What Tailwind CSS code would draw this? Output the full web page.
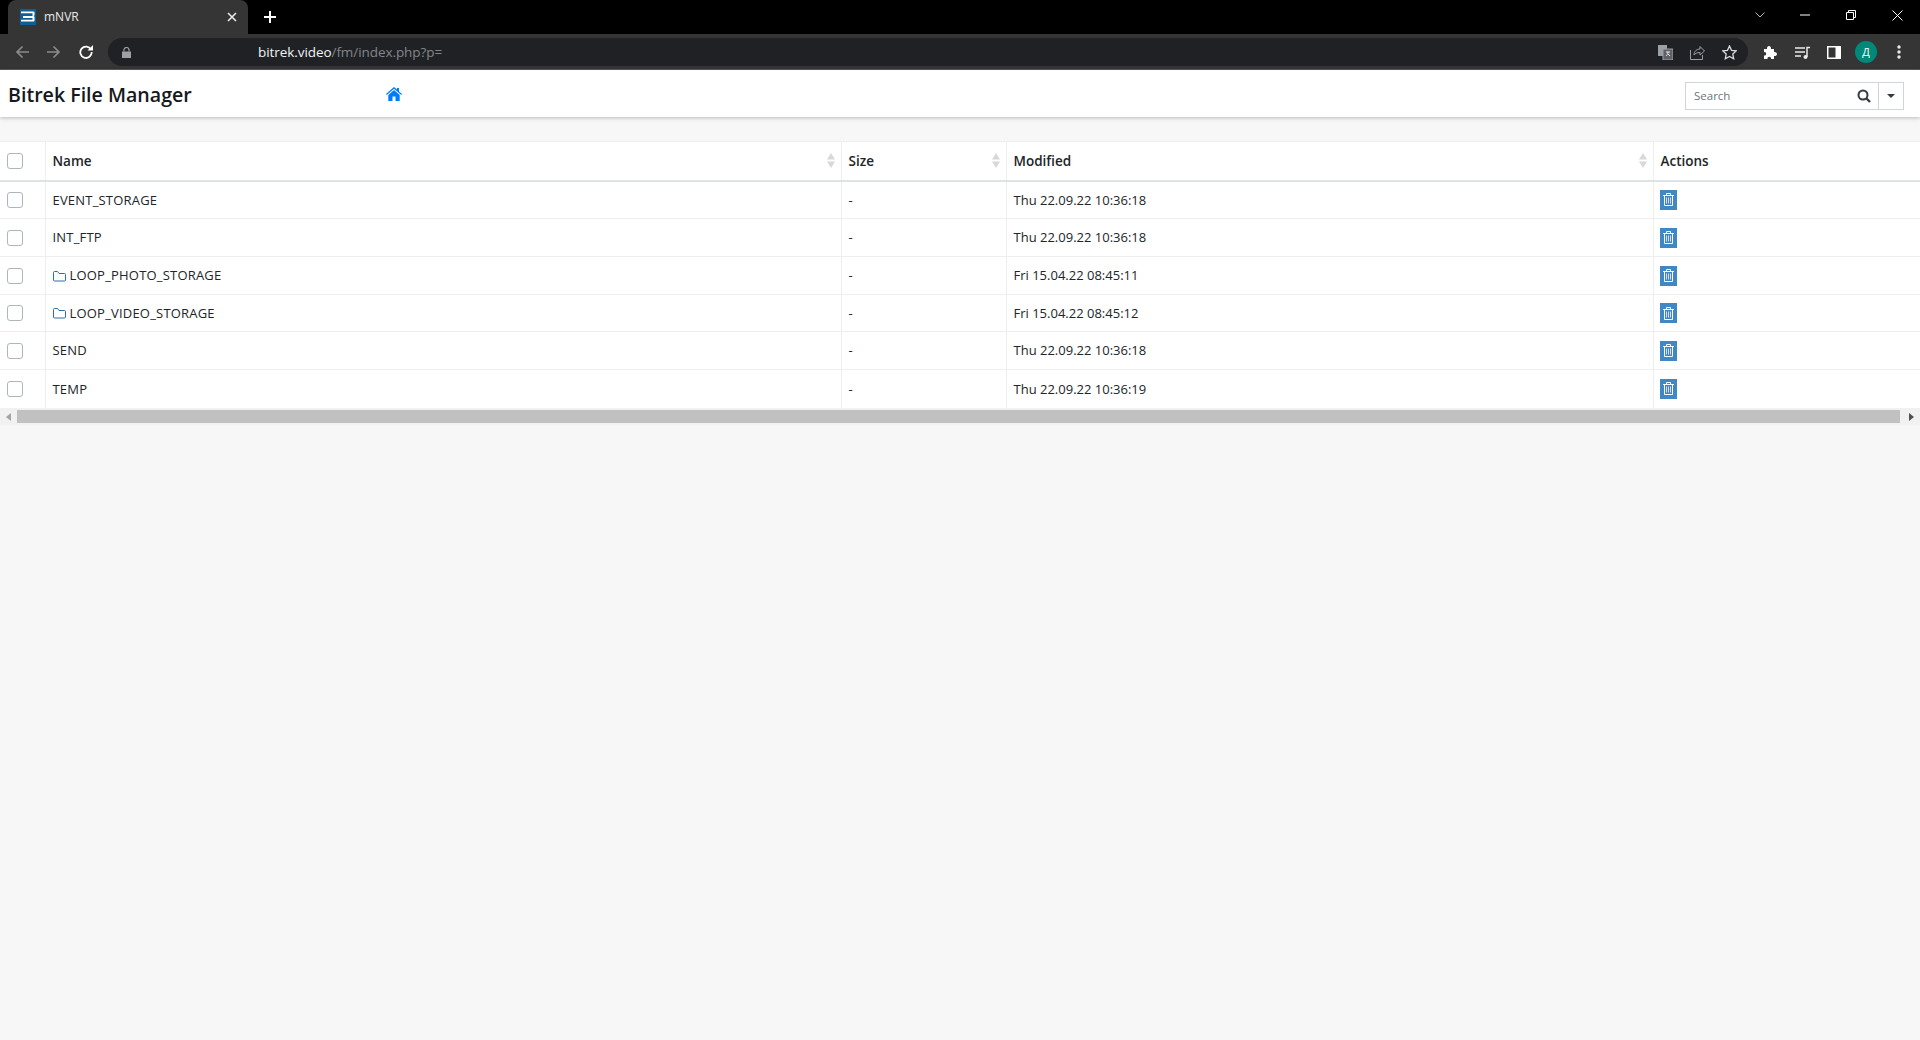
<!DOCTYPE html>
<html lang="en">
<head>
    <meta charset="UTF-8">
    <title>mNVR</title>
    <script src="https://cdn.jsdelivr.net/npm/@tailwindcss/browser@4"></script>
</head>
<body class="h-screen overflow-hidden bg-[#f7f7f7] font-['Open_Sans',sans-serif] text-[13px] text-[#212529]">

    <!-- Browser tab strip -->
    <div class="h-[34px] bg-black flex items-end pl-2 text-white">
        <div class="w-[240px] h-[34px] bg-[#353535] rounded-t-lg flex items-center pl-3 pr-2">
            <svg class="w-4 h-4 shrink-0" viewBox="0 0 16 16"><rect width="16" height="16" fill="#0f5e96"/><path d="M1 2.500h12.500a1 1 0 0 1 1 1v2.700l-.9.800.9.800v3.700a1 1 0 0 1-1 1H1v-1.800h11.500V9H3V7h9.500V4.300H1z" fill="#fff"/></svg>
            <span class="ml-2 text-xs text-[#e8eaed]">mNVR</span>
            <svg class="w-[10px] h-[10px] ml-auto mr-[3px]" viewBox="0 0 10 10"><path d="M1 1l8 8M9 1l-8 8" stroke="#e8eaed" stroke-width="1.6"/></svg>
        </div>
        <svg class="w-3 h-3 ml-4 mb-[11px]" viewBox="0 0 12 12"><path d="M6 0v12M0 6h12" stroke="#fff" stroke-width="2"/></svg>
        <div class="ml-auto h-[34px] flex items-center pb-1 text-[#e8eaed]">
            <svg class="w-[10px] h-[6px] mr-[35px]" viewBox="0 0 10 6"><path d="M.5.5L5 5 9.500.5" fill="none" stroke="#bbb"/></svg>
            <svg class="w-[10px] h-[2px] mr-[36px]" viewBox="0 0 10 2"><path d="M0 1h10" stroke="#fff"/></svg>
            <svg class="w-[10px] h-[10px] mr-[36px]" viewBox="0 0 10 10"><path d="M.5 2.500h7v7h-7zM2.500 2.500v-2h7v7h-2" fill="none" stroke="#fff"/></svg>
            <svg class="w-[11px] h-[11px] mr-[17px]" viewBox="0 0 11 11"><path d="M.5.5l10 10M10.500.5l-10 10" stroke="#fff"/></svg>
        </div>
    </div>

    <!-- Browser toolbar -->
    <div class="h-[36px] bg-[#353535] border-b border-[#5a5a5a] flex items-center pt-[1px]">
        <svg class="w-[14px] h-[14px] ml-[15px]" viewBox="0 0 14 14"><path d="M14 7H2M7.500 1.500L2 7l5.500 5.500" fill="none" stroke="#8a8a8a" stroke-width="1.700"/></svg>
        <svg class="w-[14px] h-[14px] ml-[18px]" viewBox="0 0 14 14"><path d="M0 7h12M6.500 1.500L12 7l-5.500 5.500" fill="none" stroke="#8a8a8a" stroke-width="1.700"/></svg>
        <svg class="w-[14px] h-[14px] ml-[18px]" viewBox="0 0 14 14"><path d="M12 4.500A5.700 5.700 0 1 0 12.700 7" fill="none" stroke="#fff" stroke-width="1.800"/><path d="M8.500 5.500H14V0z" fill="#fff"/></svg>
        <div class="ml-[15px] w-[1640px] h-7 bg-[#202124] rounded-full flex items-center pl-[14px]">
            <svg class="w-[9px] h-[11px]" viewBox="0 0 9 11"><path d="M0 4.500h9V11H0z" fill="#9aa0a6"/><path d="M2 4.500V3a2.500 2.500 0 0 1 5 0v1.500" fill="none" stroke="#9aa0a6" stroke-width="1.200"/></svg>
            <span class="ml-[127px] text-[13.500px] text-[#f1f3f4] tracking-[-0.07px]">bitrek.video<span class="text-[#80868b]">/fm/index.php?p=</span></span>
            <svg class="ml-auto w-[15px] h-[15px]" viewBox="0 0 15 15"><rect x="0" y="0" width="9" height="11" fill="#9aa0a6"/><rect x="5" y="4" width="10" height="11" fill="#5f6368" stroke="#9aa0a6"/><path d="M8 7h4M10 7c0 2-1 3-2 4M10 9l2 2" stroke="#e8eaed" fill="none"/></svg>
            <svg class="ml-[17px] w-[15px] h-[15px]" viewBox="0 0 15 15"><path d="M.5 5v9.500h12V10M4 10c0-4 3-6 6-6V1.500L14.500 6 10 10V7.500c-3 0-5 1-6 2.500z" fill="none" stroke="#9aa0a6"/></svg>
            <svg class="ml-[17px] mr-[11px] w-[15px] h-[15px]" viewBox="0 0 15 15"><path d="M7.500 1l2 4.300 4.700.6-3.400 3.200.9 4.600-4.200-2.300-4.200 2.300.9-4.600L.8 5.900l4.700-.6z" fill="none" stroke="#dadce0" stroke-width="1.300"/></svg>
        </div>
        <svg class="ml-[15px] w-[15px] h-[15px]" viewBox="0 0 15 15"><path d="M1 4h3c-.5-4 4.500-4 4 0h3v3c4-.5 4 4.500 0 4v3H8c.5-3-4-3-3.500 0H1v-3.500c3 .5 3-4 0-3.500z" fill="#fff"/></svg>
        <svg class="ml-[17px] w-[15px] h-[13px]" viewBox="0 0 15 13"><path d="M0 2h10M0 6h10M0 10h6" stroke="#e8eaed" stroke-width="1.400"/><path d="M12 11V1.500h3" fill="none" stroke="#e8eaed" stroke-width="1.500"/><circle cx="10.500" cy="11" r="2" fill="#e8eaed"/></svg>
        <svg class="ml-[17px] w-[14px] h-[13px]" viewBox="0 0 14 13"><path d="M0 0h14v13H0z" fill="#fff"/><path d="M1.500 1.500h7v10h-7z" fill="#353535"/></svg>
        <div class="ml-[14px] w-[22px] h-[22px] rounded-full bg-[#00897b] flex items-center justify-center text-[11px] text-white">Д</div>
        <svg class="ml-[20px] w-1 h-[14px]" viewBox="0 0 4 14"><circle cx="2" cy="2" r="1.700" fill="#e8eaed"/><circle cx="2" cy="7" r="1.700" fill="#e8eaed"/><circle cx="2" cy="12" r="1.700" fill="#e8eaed"/></svg>
    </div>

    <!-- File manager navbar -->
    <nav class="h-[47px] bg-white shadow-[0_1px_4px_rgba(0,0,0,0.25)] flex items-center pl-2 pr-4 pt-[2px]">
        <span class="w-[378px] text-[19.600px] leading-none font-semibold text-[#16181b]">Bitrek File Manager</span>
        <svg class="w-4 h-[14px] mb-[1px]" viewBox="0 0 16 14"><path d="M8 0l3 2.600V1h2v3.400l3 2.700-.8.900L8 1.800.8 8 0 7.100z" fill="#007bff"/><path d="M8 3l5.700 4.900V14H9.500V9.500h-3V14H2.300V7.900z" fill="#007bff"/></svg>
        <div class="ml-auto w-[219px] h-7 flex border border-[#ced4da] mt-[3px]">
            <div class="flex-1 flex items-center pl-2 pr-[7px] border-r border-[#ced4da]">
                <span class="text-[11.500px] text-[#6c757d]">Search</span>
                <svg class="ml-auto w-[14px] h-[14px]" viewBox="0 0 14 14"><circle cx="6" cy="6" r="4.500" fill="none" stroke="#343a40" stroke-width="2"/><path d="M9.500 9.500L13 13" stroke="#343a40" stroke-width="2.400"/></svg>
            </div>
            <div class="w-6 flex items-center justify-center">
                <div class="w-0 h-0 border-x-4 border-x-transparent border-t-4 border-t-[#343a40]"></div>
            </div>
        </div>
    </nav>

    <!-- File list -->
    <table class="mt-6 w-full table-fixed border-collapse bg-white border-t border-[#eeeeee]">
        <colgroup>
            <col class="w-[45px]"><col class="w-[796px]"><col class="w-[165px]"><col class="w-[647px]"><col>
        </colgroup>
        <thead>
            <tr class="h-[39px] border-b-2 border-[#dee2e6] text-left text-[13.500px]">
                <th class="border-r border-[#eeeeee] pl-[7px] font-normal"><div class="w-4 h-4 rounded-[3px] border border-[#adb5bd]"></div></th>
                <th class="border-r border-[#eeeeee] px-[7px] font-semibold">
                    <div class="flex items-center justify-between">Name
                        <svg class="w-2 h-[15px] -mr-[1px]" viewBox="0 0 8 15"><path d="M4 0l4 6.500H0zM4 15L0 8.500h8z" fill="#d8d8d8"/></svg>
                    </div>
                </th>
                <th class="border-r border-[#eeeeee] px-[7px] font-semibold">
                    <div class="flex items-center justify-between">Size
                        <svg class="w-2 h-[15px] -mr-[1px]" viewBox="0 0 8 15"><path d="M4 0l4 6.500H0zM4 15L0 8.500h8z" fill="#d8d8d8"/></svg>
                    </div>
                </th>
                <th class="border-r border-[#eeeeee] px-[7px] font-semibold">
                    <div class="flex items-center justify-between">Modified
                        <svg class="w-2 h-[15px] -mr-[1px]" viewBox="0 0 8 15"><path d="M4 0l4 6.500H0zM4 15L0 8.500h8z" fill="#d8d8d8"/></svg>
                    </div>
                </th>
                <th class="px-[7px] font-semibold">Actions</th>
            </tr>
        </thead>
        <tbody>
            <tr class="h-[38px] border-b border-[#eeeeee]">
                <td class="border-r border-[#eeeeee] pl-[7px]"><div class="w-4 h-4 rounded-[3px] border border-[#adb5bd]"></div></td>
                <td class="border-r border-[#eeeeee] px-[7px] pt-[1px] tracking-[0.2px]">EVENT_STORAGE</td>
                <td class="border-r border-[#eeeeee] px-[7px] pt-[1px]">-</td>
                <td class="border-r border-[#eeeeee] px-[7px] pt-[1px]">Thu 22.09.22 10:36:18</td>
                <td class="px-[6px]"><div class="w-[17px] h-5 bg-[#3f87c5] flex items-center justify-center"><svg class="w-[11px] h-[13px]" viewBox="0 0 11 13"><path d="M0 2.500h11M3.500 2.500V.5h4v2M1.500 2.500v10h8v-10" fill="none" stroke="#fff"/><path d="M3.500 4.500v6M5.500 4.500v6M7.500 4.500v6" stroke="#dcd8f5"/></svg></div></td>
            </tr>
            <tr class="h-[38px] border-b border-[#eeeeee]">
                <td class="border-r border-[#eeeeee] pl-[7px]"><div class="w-4 h-4 rounded-[3px] border border-[#adb5bd]"></div></td>
                <td class="border-r border-[#eeeeee] px-[7px] pt-[1px] tracking-[0.2px]">INT_FTP</td>
                <td class="border-r border-[#eeeeee] px-[7px] pt-[1px]">-</td>
                <td class="border-r border-[#eeeeee] px-[7px] pt-[1px]">Thu 22.09.22 10:36:18</td>
                <td class="px-[6px]"><div class="w-[17px] h-5 bg-[#3f87c5] flex items-center justify-center"><svg class="w-[11px] h-[13px]" viewBox="0 0 11 13"><path d="M0 2.500h11M3.500 2.500V.5h4v2M1.500 2.500v10h8v-10" fill="none" stroke="#fff"/><path d="M3.500 4.500v6M5.500 4.500v6M7.500 4.500v6" stroke="#dcd8f5"/></svg></div></td>
            </tr>
            <tr class="h-[38px] border-b border-[#eeeeee]">
                <td class="border-r border-[#eeeeee] pl-[7px]"><div class="w-4 h-4 rounded-[3px] border border-[#adb5bd]"></div></td>
                <td class="border-r border-[#eeeeee] px-[7px] pt-[1px] tracking-[0.2px]"><div class="flex items-center gap-1"><svg class="w-[13px] h-[11px]" viewBox="0 0 13 11"><path d="M.5 9V1.500a1 1 0 0 1 1-1h3l1.500 2h5.500a1 1 0 0 1 1 1V9a1 1 0 0 1-1 1h-10a1 1 0 0 1-1-1z" fill="none" stroke="#2f6ea8"/></svg>LOOP_PHOTO_STORAGE</div></td>
                <td class="border-r border-[#eeeeee] px-[7px] pt-[1px]">-</td>
                <td class="border-r border-[#eeeeee] px-[7px] pt-[1px]">Fri 15.04.22 08:45:11</td>
                <td class="px-[6px]"><div class="w-[17px] h-5 bg-[#3f87c5] flex items-center justify-center"><svg class="w-[11px] h-[13px]" viewBox="0 0 11 13"><path d="M0 2.500h11M3.500 2.500V.5h4v2M1.500 2.500v10h8v-10" fill="none" stroke="#fff"/><path d="M3.500 4.500v6M5.500 4.500v6M7.500 4.500v6" stroke="#dcd8f5"/></svg></div></td>
            </tr>
            <tr class="h-[37px] border-b border-[#eeeeee]">
                <td class="border-r border-[#eeeeee] pl-[7px]"><div class="w-4 h-4 rounded-[3px] border border-[#adb5bd]"></div></td>
                <td class="border-r border-[#eeeeee] px-[7px] pt-[1px] tracking-[0.2px]"><div class="flex items-center gap-1"><svg class="w-[13px] h-[11px]" viewBox="0 0 13 11"><path d="M.5 9V1.500a1 1 0 0 1 1-1h3l1.500 2h5.500a1 1 0 0 1 1 1V9a1 1 0 0 1-1 1h-10a1 1 0 0 1-1-1z" fill="none" stroke="#2f6ea8"/></svg>LOOP_VIDEO_STORAGE</div></td>
                <td class="border-r border-[#eeeeee] px-[7px] pt-[1px]">-</td>
                <td class="border-r border-[#eeeeee] px-[7px] pt-[1px]">Fri 15.04.22 08:45:12</td>
                <td class="px-[6px]"><div class="w-[17px] h-5 bg-[#3f87c5] flex items-center justify-center"><svg class="w-[11px] h-[13px]" viewBox="0 0 11 13"><path d="M0 2.500h11M3.500 2.500V.5h4v2M1.500 2.500v10h8v-10" fill="none" stroke="#fff"/><path d="M3.500 4.500v6M5.500 4.500v6M7.500 4.500v6" stroke="#dcd8f5"/></svg></div></td>
            </tr>
            <tr class="h-[38px] border-b border-[#eeeeee]">
                <td class="border-r border-[#eeeeee] pl-[7px]"><div class="w-4 h-4 rounded-[3px] border border-[#adb5bd]"></div></td>
                <td class="border-r border-[#eeeeee] px-[7px] pt-[1px] tracking-[0.2px]">SEND</td>
                <td class="border-r border-[#eeeeee] px-[7px] pt-[1px]">-</td>
                <td class="border-r border-[#eeeeee] px-[7px] pt-[1px]">Thu 22.09.22 10:36:18</td>
                <td class="px-[6px]"><div class="w-[17px] h-5 bg-[#3f87c5] flex items-center justify-center"><svg class="w-[11px] h-[13px]" viewBox="0 0 11 13"><path d="M0 2.500h11M3.500 2.500V.5h4v2M1.500 2.500v10h8v-10" fill="none" stroke="#fff"/><path d="M3.500 4.500v6M5.500 4.500v6M7.500 4.500v6" stroke="#dcd8f5"/></svg></div></td>
            </tr>
            <tr class="h-[38px]">
                <td class="border-r border-[#eeeeee] pl-[7px]"><div class="w-4 h-4 rounded-[3px] border border-[#adb5bd]"></div></td>
                <td class="border-r border-[#eeeeee] px-[7px] pt-[1px] tracking-[0.2px]">TEMP</td>
                <td class="border-r border-[#eeeeee] px-[7px] pt-[1px]">-</td>
                <td class="border-r border-[#eeeeee] px-[7px] pt-[1px]">Thu 22.09.22 10:36:19</td>
                <td class="px-[6px]"><div class="w-[17px] h-5 bg-[#3f87c5] flex items-center justify-center"><svg class="w-[11px] h-[13px]" viewBox="0 0 11 13"><path d="M0 2.500h11M3.500 2.500V.5h4v2M1.500 2.500v10h8v-10" fill="none" stroke="#fff"/><path d="M3.500 4.500v6M5.500 4.500v6M7.500 4.500v6" stroke="#dcd8f5"/></svg></div></td>
            </tr>
        </tbody>
    </table>

    <!-- Horizontal scrollbar -->
    <div class="h-[17px] bg-[#f1f1f1] flex items-center px-[6px] pt-[1px]">
        <div class="w-0 h-0 border-y-[4px] border-y-transparent border-r-[5px] border-r-[#a3a3a3]"></div>
        <div class="ml-[6px] mr-[6px] flex-1 h-[13px] bg-[#c1c1c1]"></div>
        <div class="ml-[3px] w-0 h-0 border-y-[4px] border-y-transparent border-l-[5px] border-l-[#505050]"></div>
    </div>
</body>
</html>
